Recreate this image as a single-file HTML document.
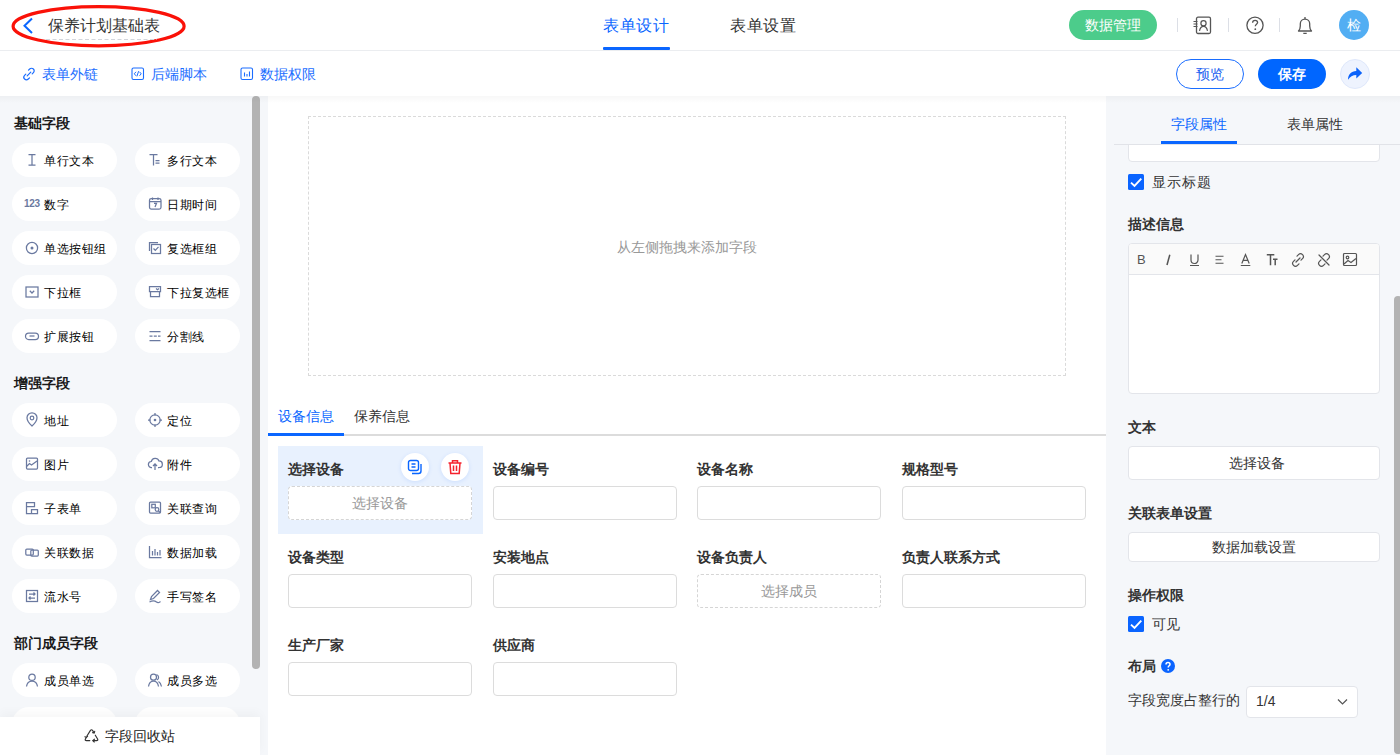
<!DOCTYPE html>
<html><head><meta charset="utf-8">
<style>
*{box-sizing:border-box;margin:0;padding:0}
html,body{width:1400px;height:755px;overflow:hidden;background:#fff}
body{position:relative;font-family:"Liberation Sans",sans-serif;color:#333;font-size:14px}
.a{position:absolute}
.t{position:absolute;white-space:nowrap;line-height:20px}
svg{position:absolute;overflow:visible}
/* header */
#hdr{left:0;top:0;width:1400px;height:51px;border-bottom:1px solid #ebedf0;background:#fff}
#bar{left:0;top:51px;width:1400px;height:45px;background:#fff}
#left{left:0;top:96px;width:268px;height:659px;background:#f5f7fa}
#center{left:268px;top:96px;width:838px;height:659px;background:#fff}
#right{left:1106px;top:96px;width:294px;height:659px;background:#f5f7fa}
#shadow{left:0;top:96px;width:1400px;height:7px;background:linear-gradient(rgba(0,0,0,0.03),rgba(0,0,0,0))}
.sec{position:absolute;left:14px;font-weight:bold;font-size:14px;color:#1a1a1a;line-height:20px}
.pill{position:absolute;width:105px;height:34px;border-radius:17px;background:#fff}
.pill span{position:absolute;left:32px;top:8px;letter-spacing:0.6px;font-size:12px;line-height:20px;color:#000;white-space:nowrap}
.pill svg{left:13px;top:9px}
.lbl{position:absolute;font-weight:bold;font-size:14px;color:#333;line-height:20px;white-space:nowrap}
.inp{position:absolute;width:184px;height:34px;border:1px solid #dcdcdc;border-radius:4px;background:#fff}
.rp-lbl{position:absolute;left:1128px;font-weight:bold;font-size:14px;color:#333;line-height:20px;white-space:nowrap}
.btn{position:absolute;left:1128px;width:252px;background:#fff;border:1px solid #e3e5ea;border-radius:4px;text-align:center;font-size:14px;color:#333}
.cb{position:absolute;left:1128px;width:16px;height:16px;background:#0a64ff;border-radius:2px}
</style></head>
<body>
<div id="hdr" class="a"></div>
<div id="bar" class="a"></div>
<div id="left" class="a"></div>
<div id="center" class="a"></div>
<div id="right" class="a"></div>

<!-- HEADER -->
<svg width="1400" height="51" style="left:0;top:0">
  <ellipse cx="98.6" cy="26.2" rx="85.5" ry="19.6" fill="none" stroke="#fa1108" stroke-width="3.2"/>
  <path d="M32 18.5 L24.5 25.8 L32 33" fill="none" stroke="#0a66ff" stroke-width="2"/>
  <line x1="46" y1="39.5" x2="157" y2="39.5" stroke="#d3d6dc" stroke-width="1" stroke-dasharray="4 2.5"/>
</svg>
<div class="t" style="left:48px;top:15px;font-size:16px;line-height:22px;color:#333">保养计划基础表</div>
<div class="t" style="left:603px;top:15px;font-size:16px;line-height:22px;color:#0a66ff;letter-spacing:0.6px">表单设计</div>
<div class="a" style="left:603px;top:47px;width:67px;height:3px;background:#0a66ff;border-radius:1px"></div>
<div class="t" style="left:730px;top:15px;font-size:16px;line-height:22px;color:#333;letter-spacing:0.6px">表单设置</div>
<div class="a" style="left:1069px;top:10px;width:88px;height:30px;border-radius:15px;background:#4ccc8b"></div>
<div class="t" style="left:1085px;top:15px;font-size:14px;color:#fff">数据管理</div>
<div class="a" style="left:1177px;top:18px;width:1px;height:14px;background:#dcdfe6"></div>
<div class="a" style="left:1228px;top:18px;width:1px;height:14px;background:#dcdfe6"></div>
<div class="a" style="left:1279px;top:18px;width:1px;height:14px;background:#dcdfe6"></div>
<svg width="20" height="20" style="left:1192px;top:15px">
  <rect x="4.5" y="2.2" width="14" height="16.3" rx="1.5" fill="none" stroke="#555" stroke-width="1.3"/>
  <path d="M1.5 6.5h4M1.5 9h4M1.5 11.5h4" stroke="#555" stroke-width="1.1"/>
  <circle cx="11.5" cy="8.2" r="2.6" fill="none" stroke="#555" stroke-width="1.2"/>
  <path d="M7.5 15.8c0.6-3 2-4.4 4-4.4s3.4 1.4 4 4.4" fill="none" stroke="#555" stroke-width="1.2"/>
</svg>
<svg width="20" height="20" style="left:1245px;top:15px">
  <circle cx="10" cy="10.3" r="8.1" fill="none" stroke="#555" stroke-width="1.3"/>
  <path d="M7.6 7.8c0-1.5 1.1-2.5 2.5-2.5s2.5 1 2.5 2.3c0 1.6-2.3 1.9-2.3 3.7" fill="none" stroke="#555" stroke-width="1.3"/>
  <circle cx="10.3" cy="14.2" r="0.9" fill="#555"/>
</svg>
<svg width="20" height="20" style="left:1295px;top:15px">
  <path d="M3.5 16h13c-1.3-1.4-1.8-2.8-1.8-5v-2.2c0-2.6-2-4.6-4.7-4.6s-4.7 2-4.7 4.6V11c0 2.2-0.5 3.6-1.8 5z" fill="none" stroke="#555" stroke-width="1.3" stroke-linejoin="round"/>
  <path d="M10 2v2M8.3 18.3h3.4" stroke="#555" stroke-width="1.3"/>
</svg>
<div class="a" style="left:1339px;top:10px;width:30px;height:30px;border-radius:15px;background:#52aef3"></div>
<div class="t" style="left:1347px;top:15px;font-size:14px;color:#fff">检</div>
<!-- TOOLBAR -->
<svg width="14" height="14" style="left:22px;top:67px">
  <path d="M5.2 8.8L8.8 5.2M6.5 3.2l1.2-1.2a2.6 2.6 0 0 1 3.7 3.7l-1.2 1.2M7.5 10.8l-1.2 1.2a2.6 2.6 0 0 1-3.7-3.7l1.2-1.2" fill="none" stroke="#1a6dff" stroke-width="1.2" stroke-linecap="round"/>
</svg>
<div class="t" style="left:42px;top:64px;color:#1a6dff">表单外链</div>
<svg width="14" height="14" style="left:131px;top:67px">
  <rect x="1" y="1" width="11.5" height="11.5" rx="1.5" fill="none" stroke="#1a6dff" stroke-width="1.1"/>
  <path d="M5 4.8L3.3 6.8 5 8.8M8.5 4.8l1.7 2-1.7 2M7.6 4.2L5.9 9.4" fill="none" stroke="#1a6dff" stroke-width="1"/>
</svg>
<div class="t" style="left:151px;top:64px;color:#1a6dff">后端脚本</div>
<svg width="14" height="14" style="left:240px;top:67px">
  <rect x="1" y="1" width="11.5" height="11.5" rx="1.5" fill="none" stroke="#1a6dff" stroke-width="1.1"/>
  <path d="M4.5 5.5v4M7 7v2.5M9.5 4.5v5" stroke="#1a6dff" stroke-width="1.1"/>
</svg>
<div class="t" style="left:260px;top:64px;color:#1a6dff">数据权限</div>
<div class="a" style="left:1176px;top:59px;width:68px;height:30px;border:1px solid #1a6dff;border-radius:15px"></div>
<div class="t" style="left:1196px;top:64px;color:#1a5ef0">预览</div>
<div class="a" style="left:1258px;top:59px;width:68px;height:30px;background:#0066ff;border-radius:15px"></div>
<div class="t" style="left:1278px;top:64px;color:#fff;font-weight:bold">保存</div>
<div class="a" style="left:1340px;top:59px;width:30px;height:30px;background:#eef3fe;border:1px solid #dfe8fb;border-radius:15px"></div>
<svg width="18" height="18" style="left:1347px;top:65px"><path d="M1 14.8c0-5.6 3.2-8.8 8.3-8.9V2.3l5.9 5.6-5.9 5.6V10C5.8 10 3 11.8 1 14.8z" fill="#0a62fa"/></svg>
<!-- LEFT PANEL -->
<div class="sec" style="top:113px">基础字段</div>
<div class="sec" style="top:373px">增强字段</div>
<div class="sec" style="top:633px">部门成员字段</div>
<div class="pill" style="left:12px;top:143px"><svg width="14" height="14"><path d="M3.5 2.5h7M3.5 13h7M7 2.5V13" fill="none" stroke="#6a79a0" stroke-width="1.25"/></svg><span>单行文本</span></div>
<div class="pill" style="left:135px;top:143px"><svg width="14" height="14"><path d="M1.5 2.5h8M5.5 2.5v11M7.5 8.5h4M7.5 11h4" fill="none" stroke="#6a79a0" stroke-width="1.25"/></svg><span>多行文本</span></div>
<div class="pill" style="left:12px;top:187px"><b style="position:absolute;left:12px;top:11px;font:bold 10px/12px 'Liberation Sans',sans-serif;color:#6a79a0;letter-spacing:-0.3px">123</b><span>数字</span></div>
<div class="pill" style="left:135px;top:187px"><svg width="14" height="14"><rect x="1.5" y="2.5" width="11.5" height="10.5" rx="1.8" fill="none" stroke="#6a79a0" stroke-width="1.25"/><path d="M1.5 5.5h11.5M4.5 1.5v2.5M10 1.5v2.5M6 7.3h2.5L7 11" fill="none" stroke="#6a79a0" stroke-width="1.25"/></svg><span>日期时间</span></div>
<div class="pill" style="left:12px;top:231px"><svg width="14" height="14"><circle cx="7" cy="8" r="5.6" fill="none" stroke="#6a79a0" stroke-width="1.25"/><circle cx="7" cy="8" r="1.5" fill="#6a79a0"/></svg><span>单选按钮组</span></div>
<div class="pill" style="left:135px;top:231px"><svg width="14" height="14"><path d="M1.5 11V2.5H10" fill="none" stroke="#6a79a0" stroke-width="1.25"/><rect x="3.5" y="4.5" width="9" height="9" fill="none" stroke="#6a79a0" stroke-width="1.25"/><path d="M5.5 8.5l1.8 1.8 3.2-3.5" fill="none" stroke="#6a79a0" stroke-width="1.25"/></svg><span>复选框组</span></div>
<div class="pill" style="left:12px;top:275px"><svg width="14" height="14"><rect x="1" y="3" width="12" height="10" fill="none" stroke="#6a79a0" stroke-width="1.25"/><path d="M4.8 6.8L7 9l2.2-2.2" fill="none" stroke="#6a79a0" stroke-width="1.25"/></svg><span>下拉框</span></div>
<div class="pill" style="left:135px;top:275px"><svg width="14" height="14"><path d="M1.5 2.5h11v5h-11z M2.5 7.5v5h9v-5" fill="none" stroke="#6a79a0" stroke-width="1.25"/><path d="M8 4.5l1.5 1.2 1.5-1.2" fill="none" stroke="#6a79a0" stroke-width="1.25"/></svg><span>下拉复选框</span></div>
<div class="pill" style="left:12px;top:319px"><svg width="14" height="14"><rect x="0.5" y="5" width="13" height="6.5" rx="3.25" fill="none" stroke="#6a79a0" stroke-width="1.25"/><path d="M4.5 8h5" fill="none" stroke="#6a79a0" stroke-width="1.25"/></svg><span>扩展按钮</span></div>
<div class="pill" style="left:135px;top:319px"><svg width="14" height="14"><path d="M1.5 3.5h11M1.5 12.5h11M1.5 8h3M5.8 8h3M10 8h2.5" fill="none" stroke="#6a79a0" stroke-width="1.25"/></svg><span>分割线</span></div>
<div class="pill" style="left:12px;top:403px"><svg width="14" height="14"><path d="M7 14s-5-4.5-5-8.2A5 5 0 0 1 12 5.8C12 9.5 7 14 7 14z" fill="none" stroke="#6a79a0" stroke-width="1.25"/><circle cx="7" cy="6" r="1.8" fill="none" stroke="#6a79a0" stroke-width="1.25"/></svg><span>地址</span></div>
<div class="pill" style="left:135px;top:403px"><svg width="14" height="14"><circle cx="7" cy="8" r="5.2" fill="none" stroke="#6a79a0" stroke-width="1.25"/><circle cx="7" cy="8" r="1.3" fill="#6a79a0"/><path d="M7 1v2.5M7 12.5V15M0 8h2.5M11.5 8H14" fill="none" stroke="#6a79a0" stroke-width="1.25"/></svg><span>定位</span></div>
<div class="pill" style="left:12px;top:447px"><svg width="14" height="14"><rect x="1.5" y="2" width="11" height="11" rx="1" fill="none" stroke="#6a79a0" stroke-width="1.25"/><path d="M1.5 10.5l3-3 2 1.5 5.5-4" fill="none" stroke="#6a79a0" stroke-width="1.25"/><circle cx="4.5" cy="5" r="0.8" fill="#6a79a0"/></svg><span>图片</span></div>
<div class="pill" style="left:135px;top:447px"><svg width="14" height="14"><path d="M4 11.5H3.5A3 3 0 0 1 3.3 5.5 4 4 0 0 1 11 5a3 3 0 0 1 0.2 6.5H10" fill="none" stroke="#6a79a0" stroke-width="1.25"/><path d="M7 14V8M5 10l2-2 2 2" fill="none" stroke="#6a79a0" stroke-width="1.25"/></svg><span>附件</span></div>
<div class="pill" style="left:12px;top:491px"><svg width="14" height="14"><path d="M1.5 2.5h8v4h-8z M1.5 6.5v7h5v-4h6v4h-6" fill="none" stroke="#6a79a0" stroke-width="1.25"/></svg><span>子表单</span></div>
<div class="pill" style="left:135px;top:491px"><svg width="14" height="14"><rect x="1.5" y="2" width="11" height="11" rx="1" fill="none" stroke="#6a79a0" stroke-width="1.25"/><rect x="3.8" y="4.3" width="3.5" height="3.5" fill="none" stroke="#6a79a0" stroke-width="1.25"/><circle cx="9" cy="9.5" r="1.8" fill="none" stroke="#6a79a0" stroke-width="1.25"/><path d="M10.3 10.8l2 2" fill="none" stroke="#6a79a0" stroke-width="1.25"/></svg><span>关联查询</span></div>
<div class="pill" style="left:12px;top:535px"><svg width="14" height="14"><rect x="0.8" y="5" width="7.5" height="6" rx="1" fill="none" stroke="#6a79a0" stroke-width="1.25"/><rect x="5.8" y="6" width="7.5" height="6" rx="1" fill="none" stroke="#6a79a0" stroke-width="1.25"/></svg><span>关联数据</span></div>
<div class="pill" style="left:135px;top:535px"><svg width="14" height="14"><path d="M1.5 2v11.5h12M4.5 7v4.5M7 5v6.5M9.5 8v3.5M12 6v5.5" fill="none" stroke="#6a79a0" stroke-width="1.25"/></svg><span>数据加载</span></div>
<div class="pill" style="left:12px;top:579px"><svg width="14" height="14"><rect x="1.5" y="2.5" width="11" height="11" fill="none" stroke="#6a79a0" stroke-width="1.25"/><path d="M4 6h6M4 10h6M8.5 4.5L10 6 8.5 7.5M5.5 8.5L4 10l1.5 1.5" fill="none" stroke="#6a79a0" stroke-width="1.25"/></svg><span>流水号</span></div>
<div class="pill" style="left:135px;top:579px"><svg width="14" height="14"><path d="M2.5 11.5l1-3 6-6 2 2-6 6z" fill="none" stroke="#6a79a0" stroke-width="1.25"/><path d="M1.5 14c3-1.5 5-1.5 7 0s3 0 4-0.5" fill="none" stroke="#6a79a0" stroke-width="1.25"/></svg><span>手写签名</span></div>
<div class="pill" style="left:12px;top:663px"><svg width="14" height="14"><circle cx="7" cy="5.2" r="3.2" fill="none" stroke="#6a79a0" stroke-width="1.25"/><path d="M1.5 14.5c0.5-3.8 2.5-5.5 5.5-5.5s5 1.7 5.5 5.5" fill="none" stroke="#6a79a0" stroke-width="1.25"/></svg><span>成员单选</span></div>
<div class="pill" style="left:135px;top:663px"><svg width="14" height="14"><circle cx="5.5" cy="5.2" r="3" fill="none" stroke="#6a79a0" stroke-width="1.25"/><path d="M0.5 14.5c0.5-3.8 2-5.5 5-5.5s4.5 1.7 5 5.5M8.5 2.5a3 3 0 0 1 0.5 5.5M10.5 9.5c1.5 0.8 2.5 2.5 3 5" fill="none" stroke="#6a79a0" stroke-width="1.25"/></svg><span>成员多选</span></div>
<div class="pill" style="left:12px;top:707px"><svg width="14" height="14"></svg><span></span></div>
<div class="pill" style="left:135px;top:707px"><svg width="14" height="14"></svg><span></span></div>
<div class="a" style="left:252px;top:96px;width:8px;height:573px;border-radius:4px;background:#b3b3b3"></div>
<div class="a" style="left:0;top:717px;width:260px;height:38px;background:#fff;box-shadow:0 -4px 10px rgba(0,0,0,0.035)"></div>
<svg width="16" height="16" style="left:84px;top:728px"><g fill="none" stroke="#333" stroke-width="1.15" stroke-linejoin="round" stroke-linecap="round"><path d="M2.8 8.2L6.3 2.6Q7.5 0.9 8.7 2.6L10 4.8"/><path d="M8.6 4.6L10.2 5L10.7 3.3"/><path d="M11.3 7.2L13.6 11Q14.4 12.6 12.5 12.6H9"/><path d="M10.4 11.2L8.8 12.6L10.3 14"/><path d="M5.8 12.6H2.5Q0.6 12.6 1.4 11L2.2 9.6"/><path d="M0.9 8.8L2.4 9.4L3.6 8.4"/></g></svg>
<div class="t" style="left:105px;top:726px;color:#222">字段回收站</div>
<!-- CENTER -->
<div class="a" style="left:308px;top:116px;width:758px;height:260px;border:1px dashed #dadada"></div>
<div class="t" style="left:617px;top:237px;color:#999">从左侧拖拽来添加字段</div>
<div class="a" style="left:268px;top:434px;width:838px;height:2px;background:#dcdcdc"></div>
<div class="a" style="left:268px;top:433px;width:76px;height:3px;background:#0a66ff"></div>
<div class="t" style="left:278px;top:406px;color:#0a66ff">设备信息</div>
<div class="t" style="left:354px;top:406px;color:#333">保养信息</div>
<div class="a" style="left:278px;top:446px;width:205px;height:88px;background:#e8f1fe"></div>
<div class="lbl" style="left:288.0px;top:459px">选择设备</div>
<div class="inp" style="left:288.0px;top:486px;border:1px dashed #d5d5d5;text-align:center;line-height:32px;color:#999">选择设备</div>
<div class="lbl" style="left:492.5px;top:459px">设备编号</div>
<div class="inp" style="left:492.5px;top:486px"></div>
<div class="lbl" style="left:697.0px;top:459px">设备名称</div>
<div class="inp" style="left:697.0px;top:486px"></div>
<div class="lbl" style="left:901.5px;top:459px">规格型号</div>
<div class="inp" style="left:901.5px;top:486px"></div>
<div class="lbl" style="left:288.0px;top:547px">设备类型</div>
<div class="inp" style="left:288.0px;top:574px"></div>
<div class="lbl" style="left:492.5px;top:547px">安装地点</div>
<div class="inp" style="left:492.5px;top:574px"></div>
<div class="lbl" style="left:697.0px;top:547px">设备负责人</div>
<div class="inp" style="left:697.0px;top:574px;border:1px dashed #d5d5d5;text-align:center;line-height:32px;color:#999">选择成员</div>
<div class="lbl" style="left:901.5px;top:547px">负责人联系方式</div>
<div class="inp" style="left:901.5px;top:574px"></div>
<div class="lbl" style="left:288.0px;top:635px">生产厂家</div>
<div class="inp" style="left:288.0px;top:662px"></div>
<div class="lbl" style="left:492.5px;top:635px">供应商</div>
<div class="inp" style="left:492.5px;top:662px"></div>
<div class="a" style="left:401px;top:453px;width:28px;height:28px;border-radius:14px;background:#fff;box-shadow:0 1px 4px rgba(10,102,255,0.12)"></div>
<svg width="16" height="16" style="left:407px;top:459px"><rect x="1.5" y="1.5" width="10" height="10" rx="2" fill="none" stroke="#0a66ff" stroke-width="1.4"/><path d="M4.5 5h4M4.5 8h4" stroke="#0a66ff" stroke-width="1.4"/><path d="M14 5v7a2.5 2.5 0 0 1-2.5 2.5H5" fill="none" stroke="#0a66ff" stroke-width="1.4"/></svg>
<div class="a" style="left:441px;top:453px;width:28px;height:28px;border-radius:14px;background:#fff;box-shadow:0 1px 4px rgba(10,102,255,0.12)"></div>
<svg width="16" height="16" style="left:447px;top:459px"><path d="M1.5 4h13M5.5 4V1.8h5V4M3 4l0.8 10.5h8.4L13 4M6.5 6.5v5.5M9.5 6.5v5.5" fill="none" stroke="#f5222d" stroke-width="1.5"/></svg>
<!-- RIGHT -->
<div class="a" style="left:1128px;top:120px;width:252px;height:42px;background:#fff;border:1px solid #e3e5ea;border-radius:4px"></div>
<div class="a" style="left:1106px;top:96px;width:294px;height:49px;background:#f5f7fa"></div>
<div class="a" style="left:1114px;top:144px;width:286px;height:1px;background:#e1e3e8"></div>
<div class="a" style="left:1161px;top:141px;width:76px;height:3px;background:#0a66ff"></div>
<div class="t" style="left:1171px;top:114px;color:#0a66ff">字段属性</div>
<div class="t" style="left:1287px;top:114px;color:#333">表单属性</div>
<svg width="16" height="16" style="left:1128px;top:174px"><rect width="16" height="16" rx="1.5" fill="#0a64ff"/><path d="M3 8.6l3.5 3.3 6.8-7.2" fill="none" stroke="#fff" stroke-width="1.9"/></svg>
<div class="t" style="left:1152px;top:172px;color:#333;letter-spacing:0.9px">显示标题</div>
<div class="rp-lbl" style="top:214px">描述信息</div>
<div class="a" style="left:1128px;top:243px;width:252px;height:151px;background:#fff;border:1px solid #e3e5ea;border-radius:4px;overflow:hidden"><div class="a" style="left:0;top:0;width:250px;height:31px;background:#fafafa;border-bottom:1px solid #e3e5ea"></div></div>
<div class="t" style="left:1137px;top:250px;font-size:13px;color:#555">B</div>
<svg width="10" height="14" style="left:1163px;top:253px"><path d="M6.8 1.8L4 12" stroke="#555" stroke-width="1.5"/></svg>
<svg width="12" height="14" style="left:1189px;top:253px"><path d="M2 1.5v5.5a3.5 3.5 0 0 0 7 0V1.5M1 12.5h9" fill="none" stroke="#555" stroke-width="1.2"/></svg>
<svg width="14" height="14" style="left:1214px;top:253px"><path d="M1.5 3.3h8M1.5 6.8h6M1.5 10.3h8" fill="none" stroke="#555" stroke-width="1.1"/></svg>
<svg width="12" height="14" style="left:1240px;top:253px"><path d="M1.8 10.5L5.5 1.5L9.2 10.5M3.2 7.3h4.6M0.8 12.5h9.5" fill="none" stroke="#555" stroke-width="1.2"/></svg>
<svg width="14" height="14" style="left:1266px;top:253px"><path d="M0.8 1.8h7.5M4.5 1.8v10.5M7 6.3h4.5M9.2 6.3v6" fill="none" stroke="#555" stroke-width="1.5"/></svg>
<svg width="16" height="16" style="left:1290px;top:252px"><path d="M6 10l4-4M7 4.2l1.5-1.5a2.8 2.8 0 0 1 4 4L11 8.2M9 11.8l-1.5 1.5a2.8 2.8 0 0 1-4-4L5 7.8" fill="none" stroke="#555" stroke-width="1.2" stroke-linecap="round"/></svg>
<svg width="16" height="16" style="left:1316px;top:252px"><path d="M7 4.2l1.5-1.5a2.8 2.8 0 0 1 4 4L11 8.2M9 11.8l-1.5 1.5a2.8 2.8 0 0 1-4-4L5 7.8M3 3l10 10" fill="none" stroke="#555" stroke-width="1.2" stroke-linecap="round"/></svg>
<svg width="16" height="16" style="left:1342px;top:252px"><rect x="1.5" y="1.5" width="13" height="12" rx="1" fill="none" stroke="#555" stroke-width="1.2"/><circle cx="5.5" cy="5.5" r="1.3" fill="none" stroke="#555" stroke-width="1.2"/><path d="M2 12l4-3.5 3 2 5-4" fill="none" stroke="#555" stroke-width="1.2"/></svg>
<div class="rp-lbl" style="top:417px">文本</div>
<div class="btn" style="top:446px;height:34px;line-height:32px;padding-left:6px">选择设备</div>
<div class="rp-lbl" style="top:503px">关联表单设置</div>
<div class="btn" style="top:532px;height:30px;line-height:28px">数据加载设置</div>
<div class="rp-lbl" style="top:585px">操作权限</div>
<svg width="16" height="16" style="left:1128px;top:616px"><rect width="16" height="16" rx="1.5" fill="#0a64ff"/><path d="M3 8.6l3.5 3.3 6.8-7.2" fill="none" stroke="#fff" stroke-width="1.9"/></svg>
<div class="t" style="left:1152px;top:614px;color:#333">可见</div>
<div class="rp-lbl" style="top:656px">布局</div>
<svg width="14" height="14" style="left:1161px;top:659px"><circle cx="7" cy="7" r="7" fill="#0a64ff"/><path d="M5 5.6c0-1.2 0.9-2 2-2s2 0.8 2 1.8c0 1.3-1.8 1.5-1.8 3" fill="none" stroke="#fff" stroke-width="1.5"/><circle cx="7.2" cy="10.8" r="0.9" fill="#fff"/></svg>
<div class="t" style="left:1128px;top:690px;color:#333">字段宽度占整行的</div>
<div class="a" style="left:1246px;top:686px;width:112px;height:32px;background:#fff;border:1px solid #e3e5ea;border-radius:4px"></div>
<div class="t" style="left:1256px;top:691px;color:#333">1/4</div>
<svg width="12" height="12" style="left:1337px;top:696px"><path d="M1 3.5l4.5 4.5 4.5-4.5" fill="none" stroke="#555" stroke-width="1.2"/></svg>
<div class="a" style="left:1394px;top:296px;width:8px;height:458px;border-radius:4px;background:#b3b3b3"></div>
<div id="shadow" class="a"></div>
</body></html>
